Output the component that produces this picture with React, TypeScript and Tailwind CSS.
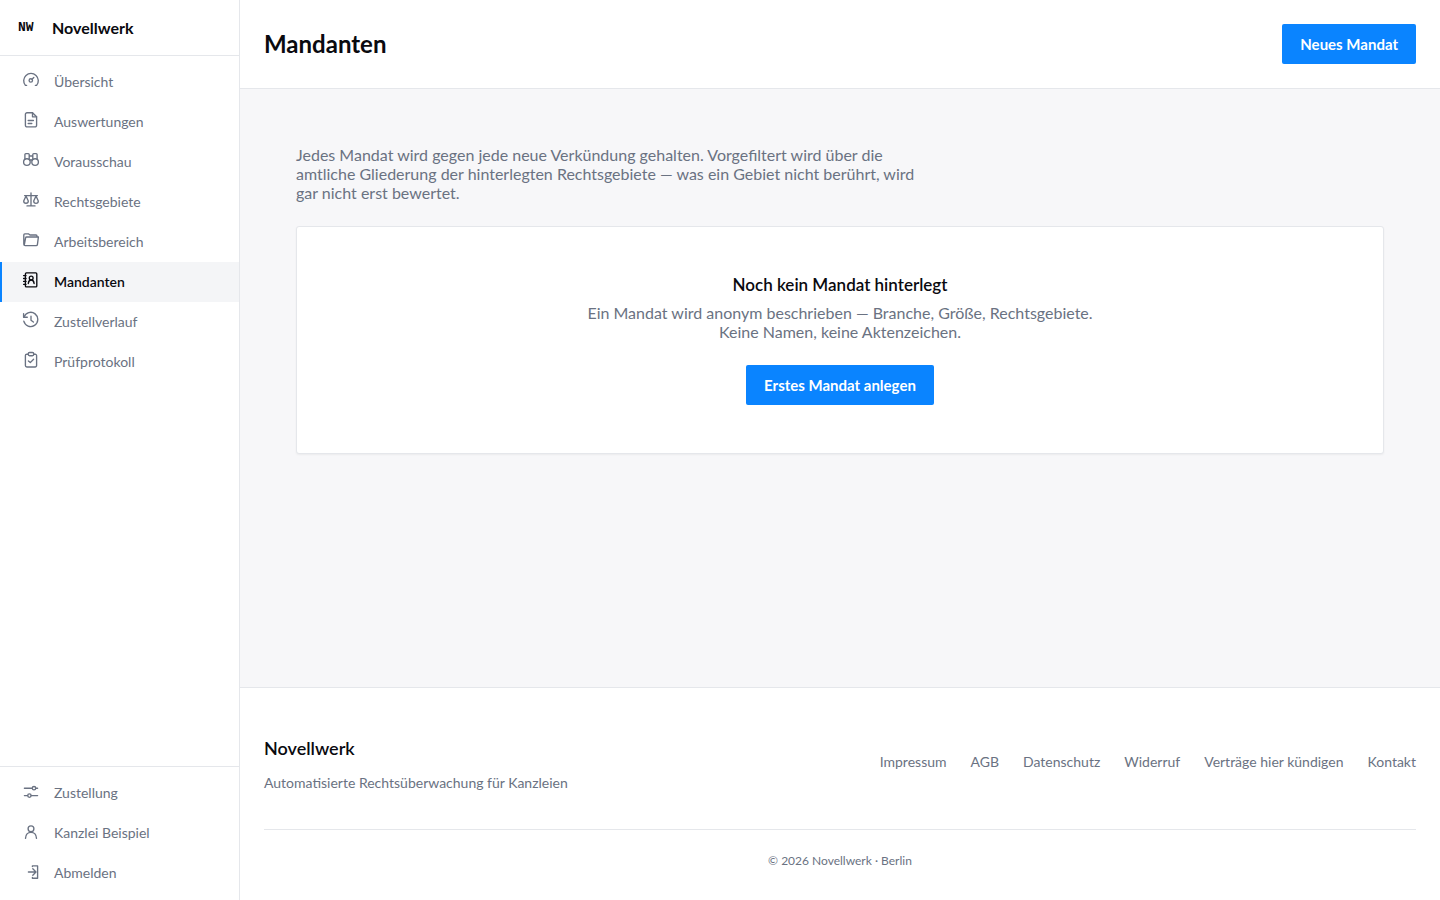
import type { ReactNode } from "react";

interface NavEntry {
  label: string;
  icon: ReactNode;
  active?: boolean;
}

const mainNav: NavEntry[] = [
  {
    label: "Übersicht",
    icon: (
      <>
        <path d="M4.6 14.4H3.4A7.3 7.3 0 1 1 14.6 14.4H13.4" />
        <circle cx="8.8" cy="9.4" r="1.7" />
        <path d="m10 8.2 1.8-1.8" />
      </>
    ),
  },
  {
    label: "Auswertungen",
    icon: (
      <>
        <path d="M10.5 1.7H5A1.6 1.6 0 0 0 3.4 3.3v11A1.6 1.6 0 0 0 5 15.9h8a1.6 1.6 0 0 0 1.6-1.6V5.8z" />
        <path d="M10.5 1.7v4.1h4.1M6.2 9.5h5.2M6.2 12.5h3.6" />
      </>
    ),
  },
  {
    label: "Vorausschau",
    icon: (
      <>
        <circle cx="4.9" cy="11" r="3.3" />
        <circle cx="13.1" cy="11" r="3.3" />
        <path d="M2.9 8V3.6a1 1 0 0 1 1-1h2.3a1 1 0 0 1 1 1v5M15.1 8V3.6a1 1 0 0 0-1-1h-2.3a1 1 0 0 0-1 1v5M7.2 5h3.6M8 9.2a1.6 1.6 0 0 1 2 0" />
      </>
    ),
  },
  {
    label: "Rechtsgebiete",
    icon: (
      <>
        <path d="M9 2v12.8M5 14.9h8M2.6 4.6h12.8" />
        <path d="M4 5 1.7 10a2.3 2.3 0 0 0 4.6 0zM14 5l-2.3 5a2.3 2.3 0 0 0 4.6 0z" />
      </>
    ),
  },
  {
    label: "Arbeitsbereich",
    icon: (
      <path d="M15 6V5a1 1 0 0 0-1-1H8L6.7 2.9H2.8a1 1 0 0 0-1 1v9.3A1.4 1.4 0 0 0 3.2 14.6h11a1.2 1.2 0 0 0 1.2-1L16.4 6H4.6a1 1 0 0 0-1 .8L2.4 13.4" />
    ),
  },
  {
    label: "Mandanten",
    active: true,
    icon: (
      <>
        <rect x="3.4" y="1.9" width="11.4" height="14" rx="1" />
        <path d="M1.6 4.6h2.4M1.6 7.5h2.4M1.6 10.4h2.4M1.6 13.3h2.4" />
        <circle cx="9.2" cy="7" r="1.9" />
        <path d="M6.3 12.5c.2-2.2 1.3-3.5 2.9-3.5s2.7 1.3 2.9 3.5" />
      </>
    ),
  },
  {
    label: "Zustellverlauf",
    icon: (
      <>
        <path d="M1.6 2.6v3.6h3.7" />
        <path d="M2 6a7.1 7.1 0 1 1-.2 4.2" />
        <path d="M9 5.2v4l2.4 1.8" />
      </>
    ),
  },
  {
    label: "Prüfprotokoll",
    icon: (
      <>
        <path d="M6.2 3.2H4.8a1.4 1.4 0 0 0-1.4 1.4v10a1.4 1.4 0 0 0 1.4 1.4h8.4a1.4 1.4 0 0 0 1.4-1.4v-10a1.4 1.4 0 0 0-1.4-1.4h-1.4" />
        <rect x="6.2" y="1.5" width="5.6" height="3.2" rx="1.4" />
        <path d="m6.4 9.9 1.9 1.7 3.3-3.4" />
      </>
    ),
  },
];

const accountNav: NavEntry[] = [
  {
    label: "Zustellung",
    icon: (
      <>
        <path d="M2.4 6.2h7.9M13.7 6.2h1.9M2.4 13.6h3.2M9.2 13.6h6.4" />
        <circle cx="12" cy="6.2" r="1.7" />
        <circle cx="7.4" cy="13.6" r="1.7" />
      </>
    ),
  },
  {
    label: "Kanzlei Beispiel",
    icon: (
      <>
        <circle cx="9" cy="6.8" r="2.9" />
        <path d="M3.5 16.4c.2-3.8 2.3-6 5.5-6s5.3 2.2 5.5 6" />
      </>
    ),
  },
  {
    label: "Abmelden",
    icon: (
      <>
        <path d="M10.4 4.6v-.7h5.2v12.3h-5.2v-.7" />
        <path d="M6.4 10h7.2M10.8 6.8 14 10l-3.2 3.2" />
      </>
    ),
  },
];

const footerLinks = [
  "Impressum",
  "AGB",
  "Datenschutz",
  "Widerruf",
  "Verträge hier kündigen",
  "Kontakt",
];

export default function App() {
  return (
    <div className="flex min-h-screen bg-[#f7f7f9] font-[Lato,sans-serif] text-[#0a0a0f]">
      <Sidebar />
      <div className="flex min-w-0 flex-1 flex-col">
        <header className="flex items-center justify-between border-b border-gray-200 bg-white p-6">
          <h1 className="text-2xl leading-10 font-bold">Mandanten</h1>
          <PrimaryButton>Neues Mandat</PrimaryButton>
        </header>

        <main className="flex-1 p-14">
          <p className="leading-[19px] text-gray-500">
            Jedes Mandat wird gegen jede neue Verkündung gehalten. Vorgefiltert wird über die
            <br />
            amtliche Gliederung der hinterlegten Rechtsgebiete — was ein Gebiet nicht berührt, wird
            <br />
            gar nicht erst bewertet.
          </p>
          <section className="mt-6 flex flex-col items-center rounded-[3px] border border-gray-200 bg-white p-12 text-center shadow-xs">
            <h2 className="text-[17px] leading-5 font-semibold">Noch kein Mandat hinterlegt</h2>
            <p className="mt-2 mb-6 leading-[19px] text-gray-500">
              Ein Mandat wird anonym beschrieben — Branche, Größe, Rechtsgebiete.
              <br />
              Keine Namen, keine Aktenzeichen.
            </p>
            <PrimaryButton>Erstes Mandat anlegen</PrimaryButton>
          </section>
        </main>

        <Footer />
      </div>
    </div>
  );
}

function PrimaryButton({ children }: { children: ReactNode }) {
  return (
    <button
      type="button"
      className="h-10 cursor-pointer rounded-xs bg-[#0a84ff] px-[18px] text-[15px] font-bold text-white hover:bg-[#0070e0]"
    >
      {children}
    </button>
  );
}

function Sidebar() {
  return (
    <aside className="flex w-60 shrink-0 flex-col border-r border-gray-200 bg-white">
      <a
        href="#"
        className="flex h-14 items-center border-b border-gray-200 pl-[18px] text-base font-bold"
      >
        <span className="w-[34px] font-['Liberation_Mono',monospace] text-[13px]">NW</span>
        Novellwerk
      </a>
      <nav className="flex-1 py-1.5" aria-label="Hauptnavigation">
        <NavList items={mainNav} />
      </nav>
      <nav className="border-t border-gray-200 pt-1.5 pb-[7px]" aria-label="Konto">
        <NavList items={accountNav} />
      </nav>
    </aside>
  );
}

function NavList({ items }: { items: NavEntry[] }) {
  return (
    <ul>
      {items.map((item) => (
        <li key={item.label}>
          <a
            href="#"
            aria-current={item.active ? "page" : undefined}
            className={`flex h-10 items-center gap-[14px] border-l-2 pl-5 text-sm ${
              item.active
                ? "border-[#0a84ff] bg-[#f4f5f7] font-semibold"
                : "border-transparent text-gray-500 hover:bg-gray-50"
            }`}
          >
            <svg
              viewBox="0 0 18 18"
              className="mb-1 size-[18px]"
              fill="none"
              stroke="currentColor"
              strokeWidth="1.35"
              strokeLinecap="round"
              strokeLinejoin="round"
              aria-hidden="true"
            >
              {item.icon}
            </svg>
            {item.label}
          </a>
        </li>
      ))}
    </ul>
  );
}

function Footer() {
  return (
    <footer className="border-t border-gray-200 bg-white px-6 pt-12 pb-8 text-gray-500">
      <div className="flex items-start justify-between border-b border-gray-200 pb-9">
        <div>
          <p className="text-lg leading-6 font-semibold text-[#0a0a0f]">Novellwerk</p>
          <p className="mt-3 text-sm leading-[21px]">
            Automatisierte Rechtsüberwachung für Kanzleien
          </p>
        </div>
        <ul className="mt-4 flex gap-6 text-sm">
          {footerLinks.map((label) => (
            <li key={label}>
              <a href="#" className="hover:text-[#0a0a0f]">
                {label}
              </a>
            </li>
          ))}
        </ul>
      </div>
      <p className="pt-6 text-center text-xs leading-[14px]">© 2026 Novellwerk · Berlin</p>
    </footer>
  );
}
